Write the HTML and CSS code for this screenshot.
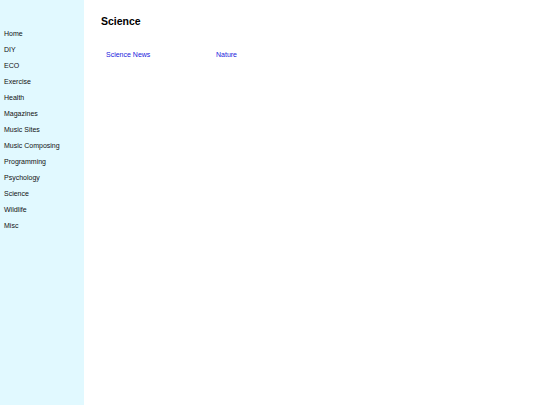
FILE: index.html
```html
<!DOCTYPE html>
<html>
<head>
<meta charset="utf-8">
<link rel="stylesheet" href="styles.css">
</head>
<body>
<div class="page">
  <nav class="sidebar">
    <ul class="nav">
      <li>Home</li>
      <li>DIY</li>
      <li>ECO</li>
      <li>Exercise</li>
      <li>Health</li>
      <li>Magazines</li>
      <li>Music Sites</li>
      <li>Music Composing</li>
      <li>Programming</li>
      <li>Psychology</li>
      <li>Science</li>
      <li>Wildlife</li>
      <li>Misc</li>
    </ul>
  </nav>
  <main class="content">
    <h1 class="title">Science</h1>
    <div class="links">
      <a class="link" href="#">Science News</a>
      <a class="link" href="#">Nature</a>
    </div>
  </main>
</div>
</body>
</html>
```

FILE: styles.css
```css
html, body {
  margin: 0;
  padding: 0;
  background: #ffffff;
  font-family: "Liberation Sans", Arial, sans-serif;
}
.page {
  display: flex;
  width: 540px;
  height: 405px;
}
.sidebar {
  width: 84px;
  flex: none;
  background: #e1f9ff;
}
.nav {
  list-style: none;
  margin: 0;
  padding: 26px 0 0 4px;
}
.nav li {
  font-size: 7px;
  line-height: 16px;
  height: 16px;
  color: #111;
}
.content {
  flex: 1;
  padding: 14px 0 0 17px;
}
.title {
  margin: 0;
  font-size: 10.5px;
  line-height: 14px;
  font-weight: bold;
  color: #000;
}
.links {
  display: flex;
  padding: 22px 0 0 5px;
}
.link {
  width: 110px;
  font-size: 7px;
  line-height: 10px;
  color: #1a1add;
  text-decoration: none;
}
```
